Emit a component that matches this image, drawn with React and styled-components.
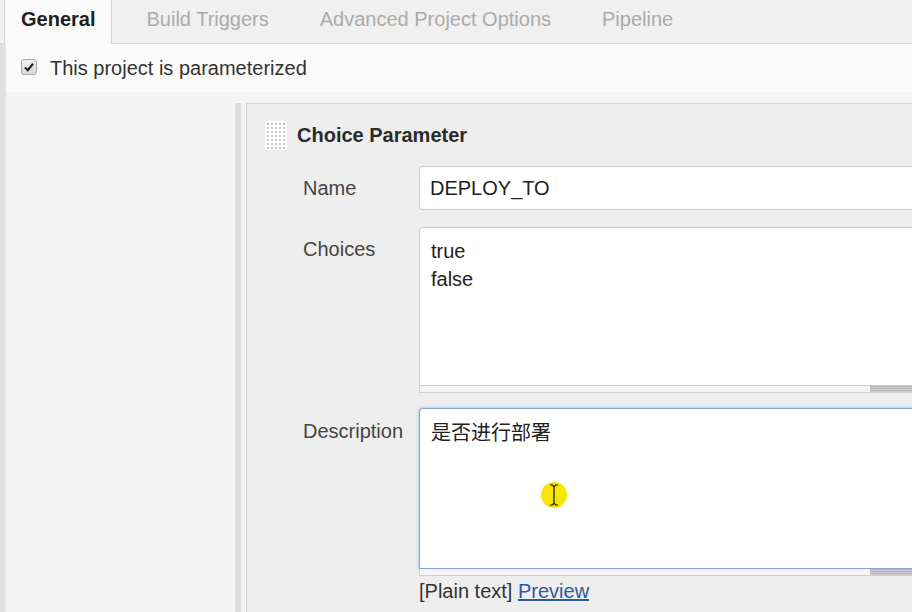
import React from "react";
import styled, { createGlobalStyle } from "styled-components";

const GlobalStyle = createGlobalStyle`
  html, body {
    margin: 0;
    padding: 0;
    background: #f3f3f3;
    overflow: hidden;
  }
  body {
    font-family: "Liberation Sans", Arial, "Noto Sans CJK SC", sans-serif;
    color: #333;
  }
`;

const Page = styled.div`
  width: 912px;
  height: 612px;
  overflow: hidden;
  display: flex;
  flex-direction: column;
  position: relative;
`;

const TabBar = styled.div`
  height: 44px;
  flex-shrink: 0;
  box-sizing: border-box;
  display: flex;
  align-items: flex-end;
  padding-left: 4px;
  background: #f0f0f0;
  border-bottom: 1px solid #d4d4d4;
`;

const Tab = styled.div`
  box-sizing: border-box;
  flex-shrink: 0;
  height: ${p => (p.active ? "45px" : "43px")};
  display: flex;
  align-items: center;
  padding: 0 ${p => (p.active ? "16px" : "17px")} 5px;
  margin-left: ${p => (p.active ? "0" : "17px")};
  margin-bottom: ${p => (p.active ? "-1px" : "0")};
  font-size: 20px;
  font-weight: ${p => (p.active ? "bold" : "normal")};
  color: ${p => (p.active ? "#1f1f1f" : "#ababab")};
  background: ${p => (p.active ? "#fafafa" : "transparent")};
  border: ${p => (p.active ? "1px solid #d4d4d4" : "none")};
  border-bottom: none;
`;

const Body = styled.div`
  flex: 1;
  display: flex;
  min-height: 0;
`;

const LeftStrip = styled.div`
  width: 5px;
  flex-shrink: 0;
  background: #e0e0e0;
  border-right: 1px solid #e8e8e8;
`;

const Main = styled.div`
  flex: 1;
  min-width: 0;
  display: flex;
  flex-direction: column;
`;

const ParamRow = styled.div`
  height: 48px;
  flex-shrink: 0;
  display: flex;
  align-items: center;
  gap: 13px;
  padding-left: 15px;
  background: #fafafa;
  font-size: 20px;
  color: #333;
`;

const CheckBox = styled.span`
  width: 16px;
  height: 16px;
  box-sizing: border-box;
  border: 1px solid #a9a9a9;
  border-radius: 3px;
  background: linear-gradient(#f0f0f0, #d9d9d9);
  display: flex;
  align-items: center;
  justify-content: center;
  margin-top: -3px;
`;

const Content = styled.div`
  flex: 1;
  display: flex;
  padding: 11px 0 0 229px;
`;

const SideBar = styled.div`
  width: 6px;
  flex-shrink: 0;
  background: #dcdcdc;
  margin-right: 5px;
`;

const Panel = styled.div`
  width: 760px;
  flex-shrink: 0;
  background: #eeeeee;
  border-left: 1px solid #d6d6d6;
  border-top: 1px solid #d6d6d6;
`;

const Header = styled.div`
  display: flex;
  align-items: center;
  gap: 10px;
  padding: 17px 0 0 18px;
`;

const Title = styled.div`
  font-size: 20px;
  font-weight: bold;
  color: #2b2b2b;
`;

const Form = styled.div`
  display: grid;
  grid-template-columns: 116px 1fr;
  padding: 16px 0 0 56px;
`;

const Label = styled.div`
  font-size: 20px;
  color: #444;
  padding-top: ${p => p.top}px;
  margin-bottom: ${p => p.gap}px;
`;

const Field = styled.div`
  display: flex;
  flex-direction: column;
  margin-bottom: ${p => p.gap}px;
`;

const TextInput = styled.div`
  height: 44px;
  box-sizing: border-box;
  border: 1px solid #cccccc;
  border-radius: 4px;
  background: #fff;
  padding: 0 10px;
  display: flex;
  align-items: center;
  font-size: 20px;
  color: #222;
`;

const TextBox = styled.div`
  height: ${p => p.h}px;
  box-sizing: border-box;
  border: 1px solid ${p => (p.focused ? "#86a8d8" : "#cccccc")};
  box-shadow: ${p => (p.focused ? "0 0 2px 1px #b7cdec" : "none")};
  border-radius: 4px 4px 0 0;
  background: #fff;
  padding: 9px 11px;
  font-size: 20px;
  line-height: 28px;
  color: #222;
`;

const Cjk = styled.span`
  font-family: "Noto Sans CJK SC", sans-serif;
  font-size: 20px;
`;

const ResizeBar = styled.div`
  height: 7px;
  box-sizing: border-box;
  display: flex;
  background: #f4f4f4;
  border: 1px solid #d0d0d0;
  border-top: none;
`;

const GripStripe = styled.div`
  width: 250px;
  background: repeating-linear-gradient(#b4b4b4 0 1px, #cfcfcf 1px 2px);
`;

const Spacer = styled.div`
  width: 450px;
  flex-shrink: 0;
`;

const Hint = styled.div`
  margin-top: 4px;
  font-size: 20px;
  color: #333;
  a {
    color: #2a5aa2;
    text-decoration: underline;
  }
`;

const CursorHalo = styled.div`
  position: absolute;
  left: 541px;
  top: 482px;
  width: 26px;
  height: 26px;
  border-radius: 50%;
  background: #f6e600;
  display: flex;
  align-items: center;
  justify-content: center;
`;

function DragHandle() {
  const dots = [];
  for (let r = 0; r < 7; r++) {
    for (let c = 0; c < 5; c++) {
      dots.push(<rect key={r + "-" + c} x={2 + c * 4} y={2 + r * 4} width="2" height="2" fill="#c8c8c8" />);
    }
  }
  return (
    <svg width="22" height="29" viewBox="0 0 22 29">
      <rect width="22" height="29" fill="#fff" />
      {dots}
    </svg>
  );
}

function Check() {
  return (
    <svg width="12" height="12" viewBox="0 0 12 12">
      <path d="M2 6.5 L4.8 9.2 L10 2.8" stroke="#222" strokeWidth="2.2" fill="none" />
    </svg>
  );
}

function Resizer() {
  return (
    <ResizeBar>
      <Spacer />
      <GripStripe />
    </ResizeBar>
  );
}

export default function App() {
  return (
    <Page>
      <GlobalStyle />
      <TabBar>
        <Tab active>General</Tab>
        <Tab>Build Triggers</Tab>
        <Tab>Advanced Project Options</Tab>
        <Tab>Pipeline</Tab>
      </TabBar>
      <Body>
        <LeftStrip />
        <Main>
          <ParamRow>
            <CheckBox>
              <Check />
            </CheckBox>
            This project is parameterized
          </ParamRow>
          <Content>
            <SideBar />
            <Panel>
              <Header>
                <DragHandle />
                <Title>Choice Parameter</Title>
              </Header>
              <Form>
                <Label top={11} gap={17}>Name</Label>
                <Field gap={17}>
                  <TextInput>DEPLOY_TO</TextInput>
                </Field>

                <Label top={11} gap={15}>Choices</Label>
                <Field gap={15}>
                  <TextBox h={159}>
                    true
                    <br />
                    false
                  </TextBox>
                  <Resizer />
                </Field>

                <Label top={12} gap={0}>Description</Label>
                <Field gap={0}>
                  <TextBox h={161} focused>
                    <Cjk>是否进行部署</Cjk>
                  </TextBox>
                  <Resizer />
                  <Hint>
                    [Plain text] <a href="#preview">Preview</a>
                  </Hint>
                </Field>
              </Form>
            </Panel>
          </Content>
        </Main>
      </Body>
      <CursorHalo>
        <svg width="10" height="22" viewBox="0 0 10 22">
          <path d="M1 1 H4 M6 1 H9 M5 2 V20 M1 21 H4 M6 21 H9 M3.5 1.5 L5 2.5 L6.5 1.5 M3.5 20.5 L5 19.5 L6.5 20.5" stroke="#111" strokeWidth="1.2" fill="none" />
        </svg>
      </CursorHalo>
    </Page>
  );
}
